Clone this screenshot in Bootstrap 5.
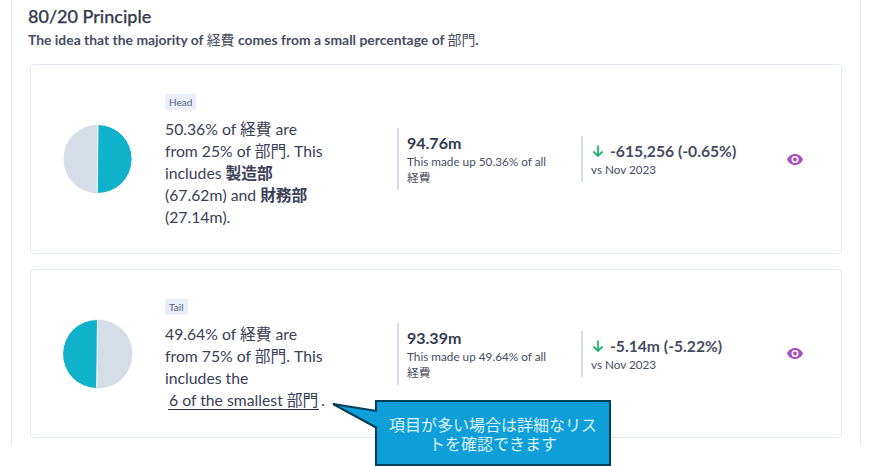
<!DOCTYPE html>
<html lang="ja"><head><meta charset="utf-8"><title>80/20 Principle</title>
<link href="https://cdn.jsdelivr.net/npm/bootstrap@5.3.0/dist/css/bootstrap.min.css" rel="stylesheet">
<style>
html,body{height:466px;overflow:hidden;background:#fff}
body{font-family:Lato,"Noto Sans CJK JP",sans-serif;color:#343a4f;position:relative}
.panel{margin-left:11px;width:850px;height:446px;border:solid #e4e8ef;border-width:0 1px;padding:0 18px 0 18px}
.ttl{font-size:18px;line-height:22px;font-weight:500;margin:0 0 0 -2px;padding-top:5px;color:#343a4f;-webkit-text-stroke:.25px #343a4f}
.sub{font-size:13.900px;line-height:18px;font-weight:700;margin:4px 0 15px -2px;color:#474d60}
.sub span{font-weight:400}
.box{border:1px solid #e2e8f0;border-radius:4px;display:flex;align-items:center;background:#fff}
.box1{height:190px;margin-bottom:15px}
.box2{height:169px}
.pie-col{width:134px;padding-left:32px;flex:none}
.pie-col svg{display:block}
.txt-col{width:232px;flex:none;padding-top:3px}
.tag{display:inline-block;font-size:10px;line-height:16px;padding:0 4px;background:#e9eef8;border-radius:2px;color:#55607a;margin-bottom:3px;vertical-align:top}
.para{width:165px;font-size:15.750px;line-height:22px;color:#3a4056}
.para b{font-weight:700}
.lnk{color:#3a4056;text-decoration:none;border-bottom:1px solid #2a2f44;padding:0 1px;margin:0 2px 0 3px}
.st1{width:184px;flex:none;border-left:2px solid #d5dde6;padding-left:8px;height:62px}
.st2{width:197px;flex:none;border-left:2px solid #d5dde6;padding-left:8px;height:46px}
.num{font-size:16px;line-height:20px;font-weight:700;color:#343a4f;margin-top:5px}
.cap{font-size:11.750px;line-height:16px;color:#474d60;width:145px;margin-top:1px}
.dl{font-size:15.700px;line-height:20px;font-weight:700;color:#454b60;display:flex;align-items:center;gap:5px;margin-top:5px}
.vs{font-size:11.700px;line-height:16px;color:#474d60;margin-top:0}
.eye{margin-left:9px}
.callout{position:absolute;left:375px;top:400px;width:236px;height:66px;background:#0f9fd8;border:2px solid #023e5a;color:#dcf1fa;font-size:16px;line-height:19px;text-align:center;padding:13px 10px 0}
.tailsvg{position:absolute;left:330px;top:400px}
</style></head><body>
<div class="panel">
<h1 class="ttl">80/20 Principle</h1>
<p class="sub">The idea that the majority of <span>経費</span> comes from a small percentage of <span>部門</span>.</p>
<div class="box box1">
 <div class="pie-col"><svg width="70" height="70" viewBox="0 0 70 70"><circle cx="35" cy="35" r="34.5" fill="#d5dde6"/><path d="M35 .5A34.5 34.5 0 1 1 34.2 69.5Z" fill="#0fb2ca" stroke="#fff" stroke-width="1"/></svg></div>
 <div class="txt-col"><span class="tag">Head</span><div class="para">50.36% of 経費 are from 25% of 部門. This includes <b>製造部</b> (67.62m) and <b>財務部</b> (27.14m).</div></div>
 <div class="st1"><div class="num">94.76m</div><div class="cap">This made up 50.36% of all 経費</div></div>
 <div class="st2"><div class="dl"><svg width="14" height="14" viewBox="0 0 14 14" fill="none" stroke="#1db56c" stroke-width="1.8"><path d="M7 1.500V12M2.500 7.500 7 12l4.500-4.500"/></svg><span>-615,256 (-0.65%)</span></div><div class="vs">vs Nov 2023</div></div>
 <svg class="eye" width="16" height="11" viewBox="0 0 16 11"><path fill-rule="evenodd" fill="#a94fc4" d="M8 0c3.600 0 6.600 2.300 8 5.500C14.600 8.700 11.600 11 8 11S1.400 8.700 0 5.500C1.400 2.300 4.400 0 8 0Zm0 2a3.500 3.500 0 1 0 0 7 3.500 3.500 0 0 0 0-7Zm0 1.600a1.900 1.900 0 1 1 0 3.800 1.900 1.900 0 0 1 0-3.800Z"/></svg>
</div>
<div class="box box2">
 <div class="pie-col"><svg width="70" height="70" viewBox="0 0 70 70"><circle cx="35" cy="35" r="34.5" fill="#d5dde6"/><path d="M34.500 .5A34.500 34.500 0 1 0 33.700 69.500Z" fill="#0fb2ca" stroke="#fff" stroke-width="1"/></svg></div>
 <div class="txt-col"><span class="tag">Tail</span><div class="para">49.64% of 経費 are from 75% of 部門. This includes the<br><a class="lnk" href="#">6 of the smallest 部門</a>.</div></div>
 <div class="st1"><div class="num">93.39m</div><div class="cap">This made up 49.64% of all 経費</div></div>
 <div class="st2"><div class="dl"><svg width="14" height="14" viewBox="0 0 14 14" fill="none" stroke="#1db56c" stroke-width="1.8"><path d="M7 1.500V12M2.500 7.500 7 12l4.500-4.500"/></svg><span>-5.14m (-5.22%)</span></div><div class="vs">vs Nov 2023</div></div>
 <svg class="eye" width="16" height="11" viewBox="0 0 16 11"><path fill-rule="evenodd" fill="#a94fc4" d="M8 0c3.600 0 6.600 2.300 8 5.500C14.600 8.700 11.600 11 8 11S1.400 8.700 0 5.500C1.400 2.300 4.400 0 8 0Zm0 2a3.500 3.500 0 1 0 0 7 3.500 3.500 0 0 0 0-7Zm0 1.600a1.900 1.900 0 1 1 0 3.800 1.900 1.900 0 0 1 0-3.800Z"/></svg>
</div>
</div>
<div class="callout">項目が多い場合は詳細なリストを確認できます</div>
<svg class="tailsvg" width="48" height="32" viewBox="0 0 48 32"><path d="M3 4 47 11V28Z" fill="#0f9fd8"/><path d="M47 11 3 4 47 28" fill="none" stroke="#023e5a" stroke-width="2"/></svg>
<script src="https://cdn.jsdelivr.net/npm/bootstrap@5.3.0/dist/js/bootstrap.bundle.min.js"></script>
</body></html>
